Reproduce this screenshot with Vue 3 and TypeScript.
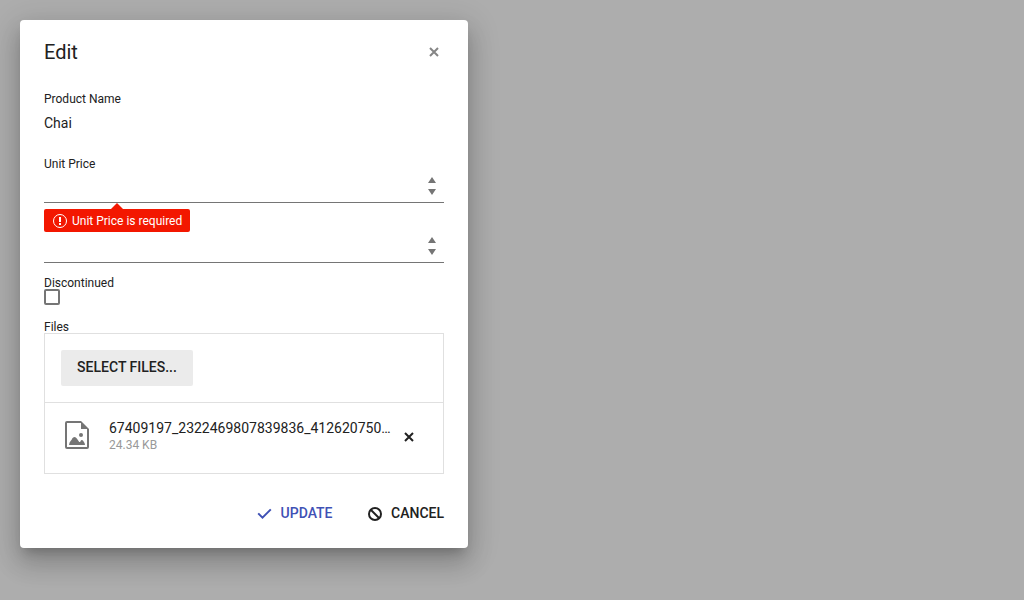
<script setup lang="ts">
import { ref } from 'vue'

interface UploadedFile {
  name: string
  size: string
}

const productName = ref('Chai')
const unitPrice = ref('')
const unitsInStock = ref('')
const discontinued = ref(false)
const files = ref<UploadedFile[]>([
  { name: '67409197_2322469807839836_4126207502847', size: '24.34 KB' },
])

function removeFile(index: number) {
  files.value.splice(index, 1)
}
</script>

<template>
  <main class="overlay">
    <form class="dialog" @submit.prevent>
      <header class="titlebar">
        <h1>Edit</h1>
        <button type="button" class="icon-button close" aria-label="Close">
          <svg viewBox="0 0 10 10"><path d="M1 1L9 9M9 1L1 9" /></svg>
        </button>
      </header>

      <div class="product">
        <label for="name">Product Name</label>
        <input id="name" v-model="productName" />
      </div>

      <div class="price">
        <label for="price">Unit Price</label>
        <div class="numeric">
          <input id="price" v-model="unitPrice" />
          <svg class="spinner" viewBox="0 0 8 18"><path d="M4 0L8 6H0ZM0 12H8L4 18Z" /></svg>
        </div>
        <div class="error" role="alert">
          <svg viewBox="0 0 14 14">
            <circle cx="7" cy="7" r="6.5" />
            <path d="M6 3H8V8H6ZM6 9H8V11H6Z" />
          </svg>
          <span>Unit Price is required</span>
        </div>
      </div>

      <div class="numeric stock">
        <input v-model="unitsInStock" aria-label="Units in stock" />
        <svg class="spinner" viewBox="0 0 8 18"><path d="M4 0L8 6H0ZM0 12H8L4 18Z" /></svg>
      </div>

      <div class="discontinued">
        <label for="discontinued">Discontinued</label>
        <input id="discontinued" v-model="discontinued" type="checkbox" />
      </div>

      <div class="files-label">Files</div>
      <section class="upload">
        <div class="dropzone">
          <button type="button" class="select">Select files...</button>
        </div>
        <div v-for="(file, i) in files" :key="file.name" class="file">
          <svg class="file-icon" viewBox="0 0 24 28">
            <path fill-rule="evenodd" d="M2 0H16L24 8V26Q24 28 22 28H2Q0 28 0 26V2Q0 0 2 0ZM2 2V26H22V8H16V2Z" />
            <path d="M4 24Q4.300 21 5.800 19.800Q6.800 19 7.200 17.500Q8 16 9.500 16Q11 16 12 17.700L14.200 21Q15 21.400 15.400 20.400Q16 19 17 19Q18 19 18.600 20.500Q20 22 20 24Z" />
            <circle cx="16" cy="14" r="2" />
          </svg>
          <div class="file-info">
            <div class="file-name">{{ file.name }}</div>
            <div class="file-size">{{ file.size }}</div>
          </div>
          <button type="button" class="icon-button remove" aria-label="Remove" @click="removeFile(i)">
            <svg viewBox="0 0 10 10"><path d="M1 1L9 9M9 1L1 9" /></svg>
          </button>
        </div>
      </section>

      <footer class="actions">
        <button type="submit" class="update">
          <svg viewBox="0 0 16 16"><path d="M1.200 7.400L5.500 11.700L13.800 3.400" /></svg>
          <span>Update</span>
        </button>
        <button type="button" class="cancel">
          <svg viewBox="0 0 16 16"><circle cx="8" cy="8" r="6" /><path d="M4 4L12 12" /></svg>
          <span>Cancel</span>
        </button>
      </footer>
    </form>
  </main>
</template>

<style>
body {
  margin: 0;
  background: #adadad;
}
</style>

<style scoped>
.overlay,
.overlay * {
  box-sizing: border-box;
}
.overlay {
  height: 600px;
  padding: 20px;
  overflow: hidden;
  background: #adadad;
  color: #212121;
  font: 14px/20px Roboto, sans-serif;
}
.dialog {
  display: flex;
  flex-direction: column;
  width: 448px;
  height: 528px;
  padding: 0 24px;
  border-radius: 4px;
  background: #fff;
  box-shadow:
    0 8px 10px -5px rgba(0, 0, 0, 0.2),
    0 16px 24px 2px rgba(0, 0, 0, 0.14),
    0 6px 30px 5px rgba(0, 0, 0, 0.12);
}
button {
  display: flex;
  align-items: center;
  padding: 0;
  border: 0;
  background: none;
  color: inherit;
  font: inherit;
  font-weight: 500;
  text-transform: uppercase;
}
input {
  margin: 0;
  padding: 0;
  border: 0;
  outline: 0;
  background: transparent;
  color: inherit;
  font: inherit;
}
svg {
  display: block;
  flex: none;
}
label,
.files-label {
  display: block;
  font-size: 12px;
  line-height: 14px;
}
.titlebar {
  display: flex;
  align-items: center;
  justify-content: space-between;
  height: 64px;
  margin-bottom: 8px;
}
h1 {
  margin: 0;
  font-size: 20px;
  font-weight: 400;
  line-height: 24px;
}
.icon-button svg {
  width: 10px;
  height: 10px;
  fill: none;
  stroke: currentColor;
  stroke-width: 2;
}
.close {
  margin-right: 5px;
  color: #858585;
}
.product {
  height: 65px;
}
.product input {
  display: block;
  width: 100%;
  height: 20px;
  margin-top: 7px;
}
.price {
  height: 74px;
}
.numeric {
  display: flex;
  align-items: center;
  height: 32px;
  border-bottom: 1px solid #757575;
}
.numeric input {
  flex: 1;
}
.spinner {
  width: 8px;
  height: 18px;
  margin: 0 8px 1px 0;
  fill: #757575;
}
.error {
  position: relative;
  display: flex;
  align-items: center;
  gap: 5px;
  width: 146px;
  height: 23px;
  margin-top: 6px;
  padding-left: 9px;
  border-radius: 2px;
  background: #f31700;
  color: #fff;
  font-size: 12px;
}
.error::before {
  content: '';
  position: absolute;
  top: -6px;
  left: 67px;
  border: solid transparent;
  border-width: 0 6px 6px;
  border-bottom-color: #f31700;
}
.error svg {
  width: 14px;
  height: 14px;
  fill: #fff;
}
.error circle {
  fill: none;
  stroke: #fff;
}
.stock {
  margin-bottom: 13px;
}
.discontinued {
  height: 44px;
}
.discontinued label {
  height: 13px;
}
.discontinued input {
  display: block;
  appearance: none;
  width: 16px;
  height: 16px;
  border: 2px solid #757575;
  border-radius: 2px;
}
.files-label {
  height: 13px;
}
.upload {
  height: 141px;
  border: 1px solid #e0e0e0;
}
.dropzone {
  height: 69px;
  padding: 16px;
  border-bottom: 1px solid #e0e0e0;
}
.select {
  width: 132px;
  height: 36px;
  padding-bottom: 2px;
  justify-content: center;
  border-radius: 2px;
  background: #ebebeb;
}
.file {
  display: flex;
  height: 70px;
  padding: 15px 29px 0 20px;
}
.file-icon {
  width: 24px;
  height: 28px;
  margin-top: 3px;
  fill: #757575;
}
.file-info {
  width: 283px;
  margin-left: 20px;
}
.file-name {
  overflow: hidden;
  text-overflow: ellipsis;
  white-space: nowrap;
}
.file-size {
  color: #999;
  font-size: 12px;
  line-height: 14px;
}
.remove {
  height: 10px;
  margin: 14px 0 0 12px;
}
.actions {
  display: flex;
  justify-content: flex-end;
  gap: 34.5px;
  margin-top: 21px;
  height: 36px;
}
.actions svg {
  width: 16px;
  height: 16px;
  margin-top: 2px;
  fill: none;
  stroke: currentColor;
  stroke-width: 2;
}
.actions button {
  gap: 8px;
}
.update {
  color: #3f51b5;
}
</style>
